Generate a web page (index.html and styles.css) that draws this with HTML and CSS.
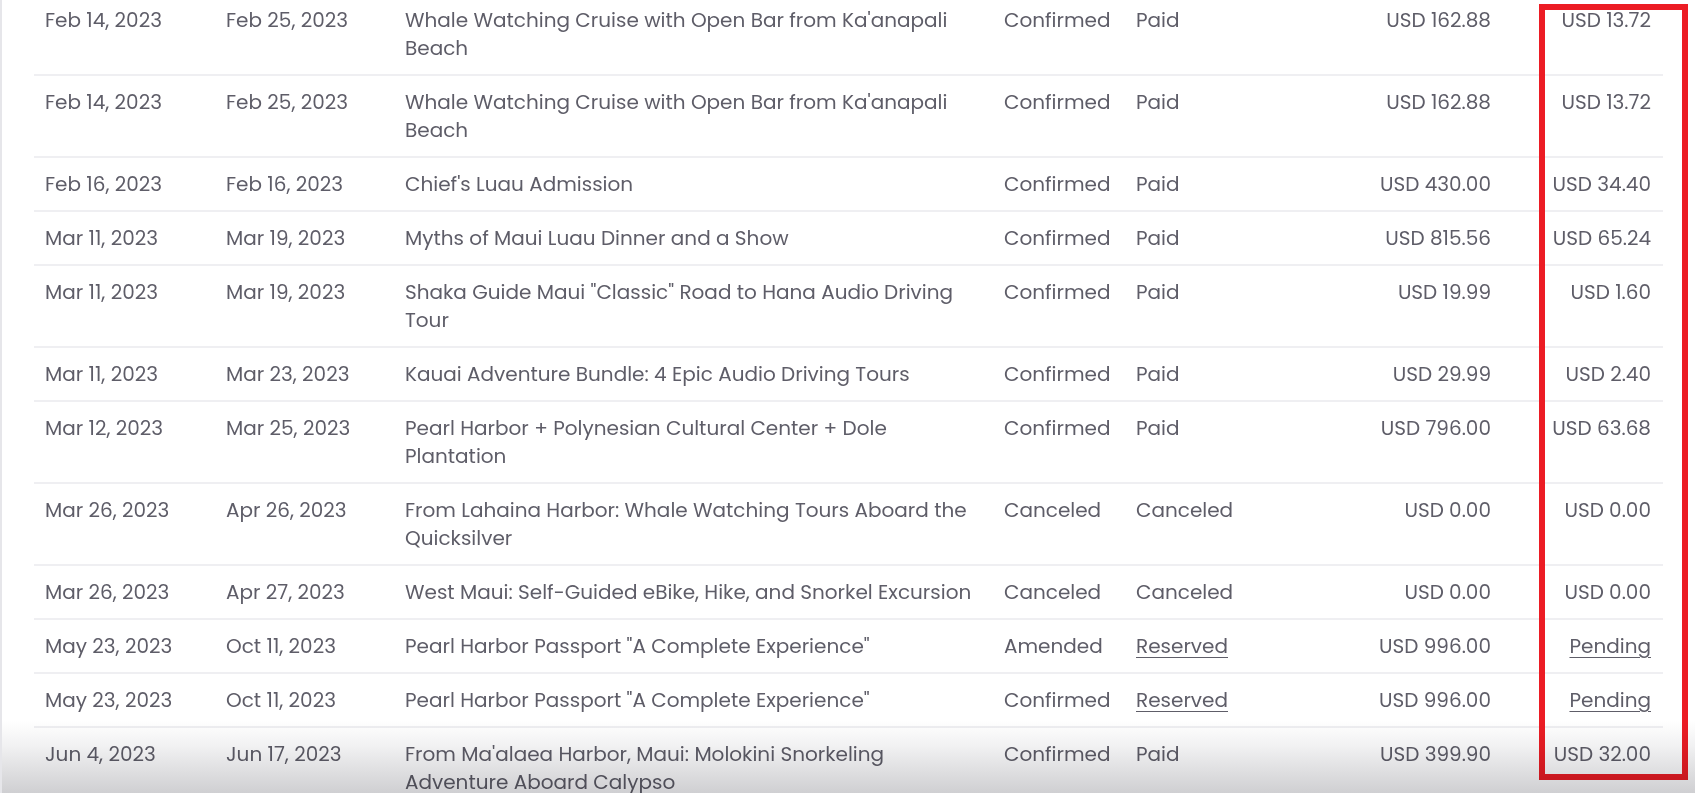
FILE: index.html
```html
<!DOCTYPE html>
<html lang="en">
<head>
<meta charset="utf-8">
<title>Bookings</title>
<link rel="stylesheet" href="styles.css">
</head>
<body>
<div class="page">
  <div class="table">
    <div class="row"><div class="c">Feb 14, 2023</div><div class="c">Feb 25, 2023</div><div class="c desc">Whale Watching Cruise with Open Bar from Ka'anapali Beach</div><div class="c">Confirmed</div><div class="c">Paid</div><div class="c num">USD 162.88</div><div class="c num com">USD 13.72</div></div>
    <div class="row"><div class="c">Feb 14, 2023</div><div class="c">Feb 25, 2023</div><div class="c desc">Whale Watching Cruise with Open Bar from Ka'anapali Beach</div><div class="c">Confirmed</div><div class="c">Paid</div><div class="c num">USD 162.88</div><div class="c num com">USD 13.72</div></div>
    <div class="row"><div class="c">Feb 16, 2023</div><div class="c">Feb 16, 2023</div><div class="c desc">Chief's Luau Admission</div><div class="c">Confirmed</div><div class="c">Paid</div><div class="c num">USD 430.00</div><div class="c num com">USD 34.40</div></div>
    <div class="row"><div class="c">Mar 11, 2023</div><div class="c">Mar 19, 2023</div><div class="c desc">Myths of Maui Luau Dinner and a Show</div><div class="c">Confirmed</div><div class="c">Paid</div><div class="c num">USD 815.56</div><div class="c num com">USD 65.24</div></div>
    <div class="row"><div class="c">Mar 11, 2023</div><div class="c">Mar 19, 2023</div><div class="c desc">Shaka Guide Maui "Classic" Road to Hana Audio Driving Tour</div><div class="c">Confirmed</div><div class="c">Paid</div><div class="c num">USD 19.99</div><div class="c num com">USD 1.60</div></div>
    <div class="row"><div class="c">Mar 11, 2023</div><div class="c">Mar 23, 2023</div><div class="c desc">Kauai Adventure Bundle: 4 Epic Audio Driving Tours</div><div class="c">Confirmed</div><div class="c">Paid</div><div class="c num">USD 29.99</div><div class="c num com">USD 2.40</div></div>
    <div class="row"><div class="c">Mar 12, 2023</div><div class="c">Mar 25, 2023</div><div class="c desc">Pearl Harbor + Polynesian Cultural Center + Dole Plantation</div><div class="c">Confirmed</div><div class="c">Paid</div><div class="c num">USD 796.00</div><div class="c num com">USD 63.68</div></div>
    <div class="row"><div class="c">Mar 26, 2023</div><div class="c">Apr 26, 2023</div><div class="c desc">From Lahaina Harbor: Whale Watching Tours Aboard the Quicksilver</div><div class="c">Canceled</div><div class="c">Canceled</div><div class="c num">USD 0.00</div><div class="c num com">USD 0.00</div></div>
    <div class="row"><div class="c">Mar 26, 2023</div><div class="c">Apr 27, 2023</div><div class="c desc">West Maui: Self-Guided eBike, Hike, and Snorkel Excursion</div><div class="c">Canceled</div><div class="c">Canceled</div><div class="c num">USD 0.00</div><div class="c num com">USD 0.00</div></div>
    <div class="row"><div class="c">May 23, 2023</div><div class="c">Oct 11, 2023</div><div class="c desc">Pearl Harbor Passport "A Complete Experience"</div><div class="c">Amended</div><div class="c"><a class="link" href="#">Reserved</a></div><div class="c num">USD 996.00</div><div class="c num com"><a class="link" href="#">Pending</a></div></div>
    <div class="row"><div class="c">May 23, 2023</div><div class="c">Oct 11, 2023</div><div class="c desc">Pearl Harbor Passport "A Complete Experience"</div><div class="c">Confirmed</div><div class="c"><a class="link" href="#">Reserved</a></div><div class="c num">USD 996.00</div><div class="c num com"><a class="link" href="#">Pending</a></div></div>
    <div class="row"><div class="c">Jun 4, 2023</div><div class="c">Jun 17, 2023</div><div class="c desc">From Ma'alaea Harbor, Maui: Molokini Snorkeling Adventure Aboard Calypso</div><div class="c">Confirmed</div><div class="c">Paid</div><div class="c num">USD 399.90</div><div class="c num com">USD 32.00</div></div>
  </div>
  <div class="highlight"></div>
  <div class="fade"></div>
</div>
</body>
</html>
```
FILE: styles.css
```css
html, body {
  margin: 0;
  padding: 0;
  background: #ffffff;
}
body {
  font-family: "Poppins", "Open Sans", "Liberation Sans", sans-serif;
  font-size: 20px;
  color: #5e5d68;
  overflow: hidden;
}
.page {
  position: relative;
  height: 793px;
  overflow: hidden;
  border-left: 2px solid #e6e6ea;
  box-sizing: border-box;
}
.table {
  margin: -6px 0 0 32px;
  width: 1629px;
}
.row {
  display: grid;
  grid-template-columns: 181px 179px 599px 132px 175px 202px 161px;
  border-bottom: 2px solid #efeff2;
}
.c {
  padding: 12px 11px;
  line-height: 28px;
  white-space: nowrap;
}
.c.desc {
  white-space: normal;
  padding-right: 16px;
}
.c.num {
  text-align: right;
}
.c.com {
  padding-right: 12px;
}
.link {
  color: inherit;
  text-decoration: underline;
  text-decoration-thickness: 1px;
  text-underline-offset: 4px;
}
.highlight {
  position: absolute;
  left: 1537px;
  top: 4px;
  width: 149px;
  height: 776px;
  border: 6px solid #ec1c24;
  box-sizing: border-box;
}
.fade {
  position: absolute;
  left: 0;
  right: 0;
  bottom: 0;
  height: 72px;
  background: linear-gradient(to bottom, #ffffff 0%, #f1f1f2 35%, #dcdcde 75%, #cfcfd2 100%);
  mix-blend-mode: multiply;
  pointer-events: none;
}
```
